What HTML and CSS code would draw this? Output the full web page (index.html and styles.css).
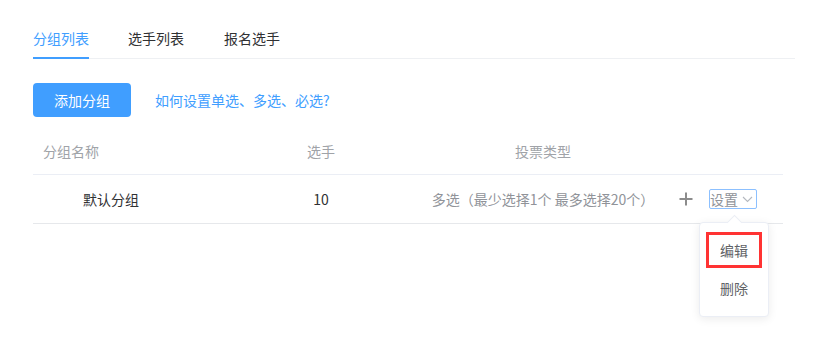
FILE: index.html
```html
<!DOCTYPE html>
<html lang="zh-CN">
<head>
  <meta charset="UTF-8">
  <title>分组列表</title>
  <link rel="stylesheet" href="styles.css">
</head>
<body>
  <div class="page">
    <div class="tabs">
      <div class="tab active">分组列表</div>
      <div class="tab">选手列表</div>
      <div class="tab">报名选手</div>
    </div>

    <div class="toolbar">
      <button class="btn-primary">添加分组</button>
      <a class="help-link" href="#">如何设置单选、多选、必选?</a>
    </div>

    <div class="table">
      <div class="row head">
        <div class="cell c-name">分组名称</div>
        <div class="cell c-num">选手</div>
        <div class="cell c-type">投票类型</div>
        <div class="cell c-act"></div>
      </div>
      <div class="row body">
        <div class="cell c-name">默认分组</div>
        <div class="cell c-num">10</div>
        <div class="cell c-type">多选（最少选择1个 最多选择20个）</div>
        <div class="cell c-act">
          <svg class="plus" width="14" height="14" viewBox="0 0 14 14">
            <path d="M7 0.5V13.5M0.5 7H13.5" stroke="#8c8c8c" stroke-width="2" fill="none"/>
          </svg>
          <div class="setting">
            <span>设置</span>
            <svg class="chev" width="11" height="7" viewBox="0 0 11 7">
              <path d="M1 1L5.5 5.5L10 1" stroke="#b4b8bf" stroke-width="1.1" fill="none"/>
            </svg>
          </div>
          <div class="menu">
            <div class="menu-item selected">编辑</div>
            <div class="menu-item">删除</div>
          </div>
        </div>
      </div>
    </div>
  </div>
</body>
</html>
```

FILE: styles.css
```css
html, body {
  height: 100%;
}
body {
  margin: 0;
  background: #fff;
  font-family: "Noto Sans CJK SC", "Liberation Sans", sans-serif;
  font-size: 14px;
}
.page {
  min-height: 344px;
  padding: 18px 29px 0 33px;
}
.tabs {
  display: flex;
  border-bottom: 1px solid #eef0f3;
}
.tab {
  height: 39px;
  line-height: 40px;
  padding: 0 20px;
  color: #303133;
  border-bottom: 2px solid transparent;
  margin-bottom: -1px;
}
.tab:first-child {
  padding-left: 0;
}
.tab.active {
  color: #409eff;
  border-bottom-color: #409eff;
  margin-right: 20px;
  padding-right: 0;
}
.tab.active + .tab {
  padding-left: 19px;
}
.toolbar {
  display: flex;
  align-items: center;
  margin-top: 24px;
}
.btn-primary {
  width: 98px;
  height: 34px;
  border: none;
  border-radius: 4px;
  background: #409eff;
  color: #fff;
  font-family: inherit;
  font-size: 14px;
  padding: 0;
}
.help-link {
  margin-left: 24px;
  color: #409eff;
  text-decoration: none;
}
.table {
  width: 750px;
  margin-top: 10px;
}
.row {
  display: grid;
  grid-template-columns: 196px 184px 260px 110px;
  align-items: center;
}
.row.head {
  height: 47px;
  border-bottom: 1px solid #ebeef5;
  color: #a0a3a8;
}
.row.body {
  height: 48px;
  border-bottom: 1px solid #e6e8eb;
}
.cell {
  line-height: 20px;
}
.head .c-name {
  padding-left: 10px;
}
.body .c-name {
  padding-left: 50px;
  color: #303133;
}
.c-num, .c-type {
  text-align: center;
}
.body .c-num {
  color: #303133;
}
.body .c-type {
  color: #909399;
}
.c-act {
  position: relative;
  display: flex;
  align-items: center;
  padding-left: 6px;
}
.plus {
  margin-right: 16px;
}
.setting {
  display: flex;
  align-items: center;
  width: 46px;
  height: 18px;
  border: 1px solid #8cc0ff;
  border-radius: 2px;
  color: #909399;
  line-height: 18px;
}
.chev {
  margin-left: 4px;
}
.menu {
  position: absolute;
  z-index: 5;
  top: 33px;
  left: 26px;
  width: 56px;
  padding: 9px 6px 10px;
  background: #fff;
  border: 1px solid #ebeef5;
  border-radius: 4px;
  box-shadow: 0 2px 10px rgba(0, 0, 0, 0.08);
}
.menu::before {
  content: "";
  position: absolute;
  top: -6px;
  left: 29px;
  width: 10px;
  height: 10px;
  background: #fff;
  border-left: 1px solid #ebeef5;
  border-top: 1px solid #ebeef5;
  transform: rotate(45deg);
}
.menu-item {
  height: 36px;
  line-height: 36px;
  text-align: center;
  color: #606266;
  box-sizing: border-box;
}
.menu-item.selected {
  border: 3px solid #ff3333;
  line-height: 30px;
  margin-bottom: 2px;
}
```
